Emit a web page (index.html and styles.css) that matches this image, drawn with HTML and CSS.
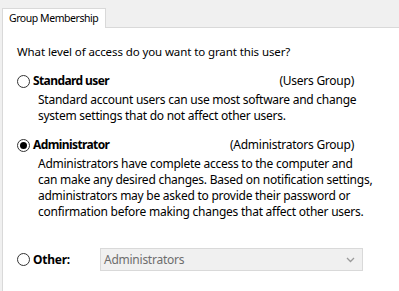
FILE: index.html
```html
<!DOCTYPE html>
<html lang="en">
<head>
  <meta charset="UTF-8">
  <title>Group Membership</title>
  <link rel="stylesheet" href="styles.css">
</head>
<body>
  <div class="tabs">
    <div class="tab">Group Membership</div>
  </div>

  <div class="panel">
    <p class="question">What level of access do you want to grant this user?</p>

    <!-- Standard user -->
    <div class="option">
      <span class="radio"></span>
      <span class="option-name">Standard user</span>
      <span class="option-group">(Users Group)</span>
    </div>
    <p class="desc">
      <span>Standard account users can use most software and change</span>
      <span>system settings that do not affect other users.</span>
    </p>

    <!-- Administrator -->
    <div class="option option-second">
      <span class="radio checked"></span>
      <span class="option-name">Administrator</span>
      <span class="option-group">(Administrators Group)</span>
    </div>
    <p class="desc">
      <span>Administrators have complete access to the computer and</span>
      <span>can make any desired changes. Based on notification settings,</span>
      <span>administrators may be asked to provide their password or</span>
      <span>confirmation before making changes that affect other users.</span>
    </p>

    <!-- Other -->
    <div class="option option-other">
      <span class="radio"></span>
      <span class="option-name other-name">Other:</span>
      <div class="dropdown">
        <span>Administrators</span>
        <svg class="chevron" width="9" height="6" viewBox="0 0 9 6">
          <path d="M1 1 L4.5 4.5 L8 1" fill="none" stroke="#9a9a9a" stroke-width="1.3"/>
        </svg>
      </div>
    </div>
  </div>
</body>
</html>
```

FILE: styles.css
```css
* {
  box-sizing: border-box;
  margin: 0;
  padding: 0;
}

html, body {
  height: 100%;
}

body {
  font-family: 'Noto Sans', 'Open Sans', Arial, sans-serif;
  font-size: 12px;
  line-height: 16px;
  color: #000;
  background-color: #f0f0f0;
  display: flex;
  flex-direction: column;
  overflow: hidden;
}

.tabs {
  height: 27px;
  padding-left: 2px;
  display: flex;
  align-items: flex-end;
}

.tab {
  position: relative;
  z-index: 1;
  height: 20px;
  margin-bottom: -1px;
  padding: 1px 0 0 6px;
  width: 104px;
  font-size: 10.5px;
  letter-spacing: -0.45px;
  background-color: #fff;
  border: 1px solid #d9d9d9;
  border-bottom: none;
  white-space: nowrap;
}

.panel {
  flex: 1;
  margin-left: 2px;
  padding: 16px 0 0 14px;
  background-color: #fff;
  border-top: 1px solid #d9d9d9;
  border-left: 1px solid #d9d9d9;
  letter-spacing: -0.25px;
}

.question {
  margin-bottom: 13px;
  font-size: 11.5px;
  letter-spacing: -0.1px;
}

.option {
  display: flex;
  align-items: center;
  height: 16px;
  width: 337px;
}

.option-second {
  margin-top: 13px;
}

.radio {
  width: 13px;
  height: 13px;
  border: 1px solid #333;
  border-radius: 50%;
  background-color: #fff;
  margin-right: 3px;
  display: flex;
  align-items: center;
  justify-content: center;
  flex-shrink: 0;
}

.radio.checked::after {
  content: '';
  width: 7px;
  height: 7px;
  border-radius: 50%;
  background-color: #000;
}

.option-name {
  font-weight: bold;
  letter-spacing: -0.6px;
}

.option-group {
  margin-left: auto;
}

.desc {
  margin-top: 3px;
  padding-left: 21px;
  display: flex;
  flex-direction: column;
  white-space: nowrap;
}

.option-other {
  margin-top: 28px;
  height: 23px;
  width: auto;
}

.other-name {
  width: 67px;
  letter-spacing: -0.25px;
}

.dropdown {
  width: 263px;
  height: 23px;
  background-color: #f0f0f0;
  border: 1px solid #d9d9d9;
  color: #6d6d6d;
  display: flex;
  align-items: center;
  justify-content: space-between;
  padding: 0 7px 0 3px;
}
```
